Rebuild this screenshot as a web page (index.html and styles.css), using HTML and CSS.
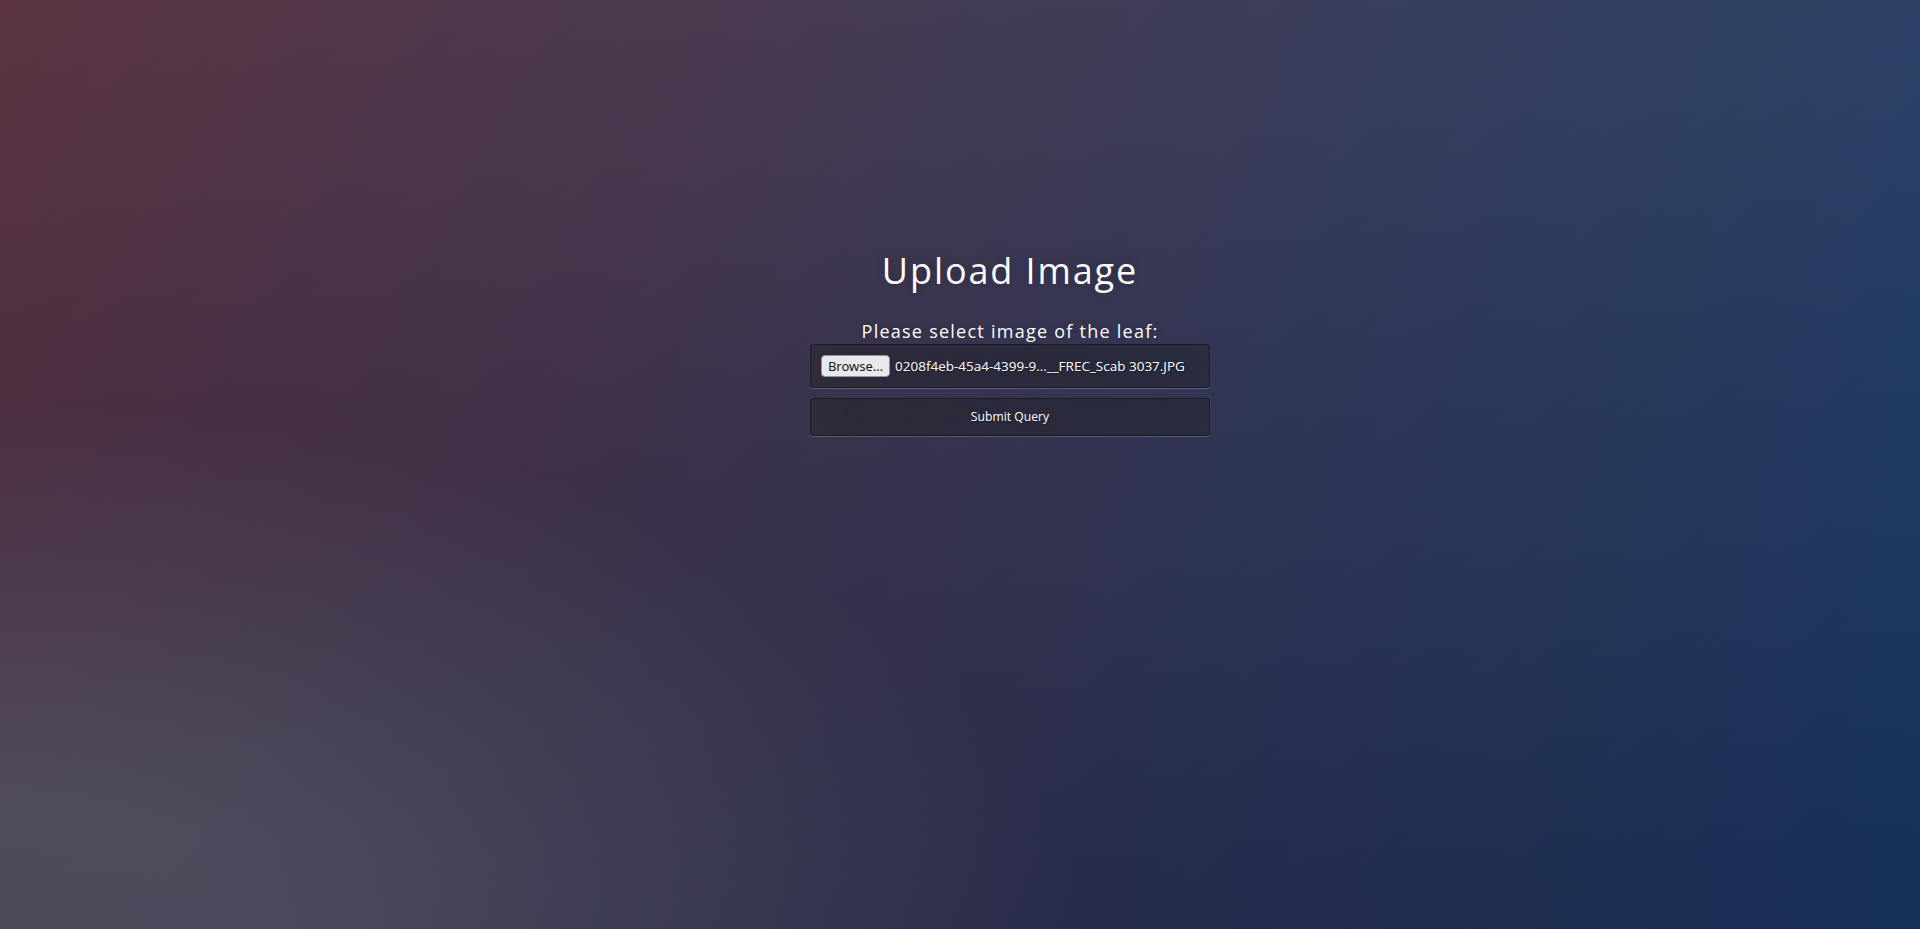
FILE: index.html
```html
<!DOCTYPE html>
<html lang="en">
<head>
<meta charset="utf-8">
<title>Upload Image</title>
<link rel="stylesheet" href="styles.css">
</head>
<body>
  <main class="login">
    <h1 class="title">Upload Image</h1>
    <form class="form">
      <label class="label">Please select image of the leaf:</label>
      <div class="field file-field">
        <span class="browse">Browse…</span>
        <span class="filename">0208f4eb-45a4-4399-9…__FREC_Scab 3037.JPG</span>
      </div>
      <button type="button" class="field submit">Submit Query</button>
    </form>
  </main>
</body>
</html>
```

FILE: styles.css
```css
* { box-sizing: border-box; }

html {
  width: 100%;
  height: 100%;
  overflow: hidden;
}

body {
  margin: 0;
  width: 100%;
  height: 100%;
  font-family: "Open Sans", "Noto Sans", sans-serif;
  background-color: #092756;
  background-image:
    radial-gradient(ellipse farthest-corner at 0% 100%, rgba(104,128,138,.4) 10%, rgba(138,114,76,0) 40%),
    linear-gradient(to bottom, rgba(57,173,219,.25) 0%, rgba(42,60,87,.4) 100%),
    linear-gradient(135deg, #670d10 0%, #092756 100%);
  display: flex;
  justify-content: center;
  align-items: flex-start;
  padding-top: calc(40vh - 150px);
}

.login {
  width: 400px;
  margin-left: 100px;
}

.title {
  margin: 24px 0;
  font-size: 36px;
  font-weight: 400;
  line-height: 49px;
  color: #fff;
  text-shadow: 0 0 10px rgba(0,0,0,0.3);
  letter-spacing: 1.9px;
  text-align: center;
}

.form {
  display: flex;
  flex-direction: column;
}

.label {
  display: block;
  font-size: 18px;
  line-height: 25px;
  color: #fff;
  letter-spacing: 1.25px;
  text-align: center;
  text-shadow: 0 0 10px rgba(0,0,0,0.3);
}

.field {
  width: 100%;
  margin-bottom: 10px;
  padding: 10px;
  font-family: "Open Sans", sans-serif;
  font-size: 13px;
  color: #fff;
  text-shadow: 1px 1px 1px rgba(0,0,0,0.3);
  background: rgba(0,0,0,0.3);
  border: 1px solid rgba(0,0,0,0.3);
  border-radius: 4px;
  box-shadow: inset 0 -5px 45px rgba(100,100,100,0.2), 0 1px 1px rgba(255,255,255,0.2);
  outline: none;
}

.file-field {
  display: flex;
  align-items: center;
  gap: 5px;
  height: 44px;
}

.browse {
  display: inline-flex;
  align-items: center;
  justify-content: center;
  width: 69px;
  height: 22px;
  font-family: "Noto Sans", "DejaVu Sans", sans-serif;
  font-size: 13px;
  color: #15141a;
  text-shadow: none;
  background: #e9e9ed;
  border: 1px solid #8f8f9d;
  border-radius: 4px;
}

.filename {
  white-space: nowrap;
  font-size: 13.5px;
  line-height: 18px;
}

.submit {
  height: 38px;
  padding: 0 10px;
  font-size: 12.2px;
  text-align: center;
  cursor: pointer;
}
```
